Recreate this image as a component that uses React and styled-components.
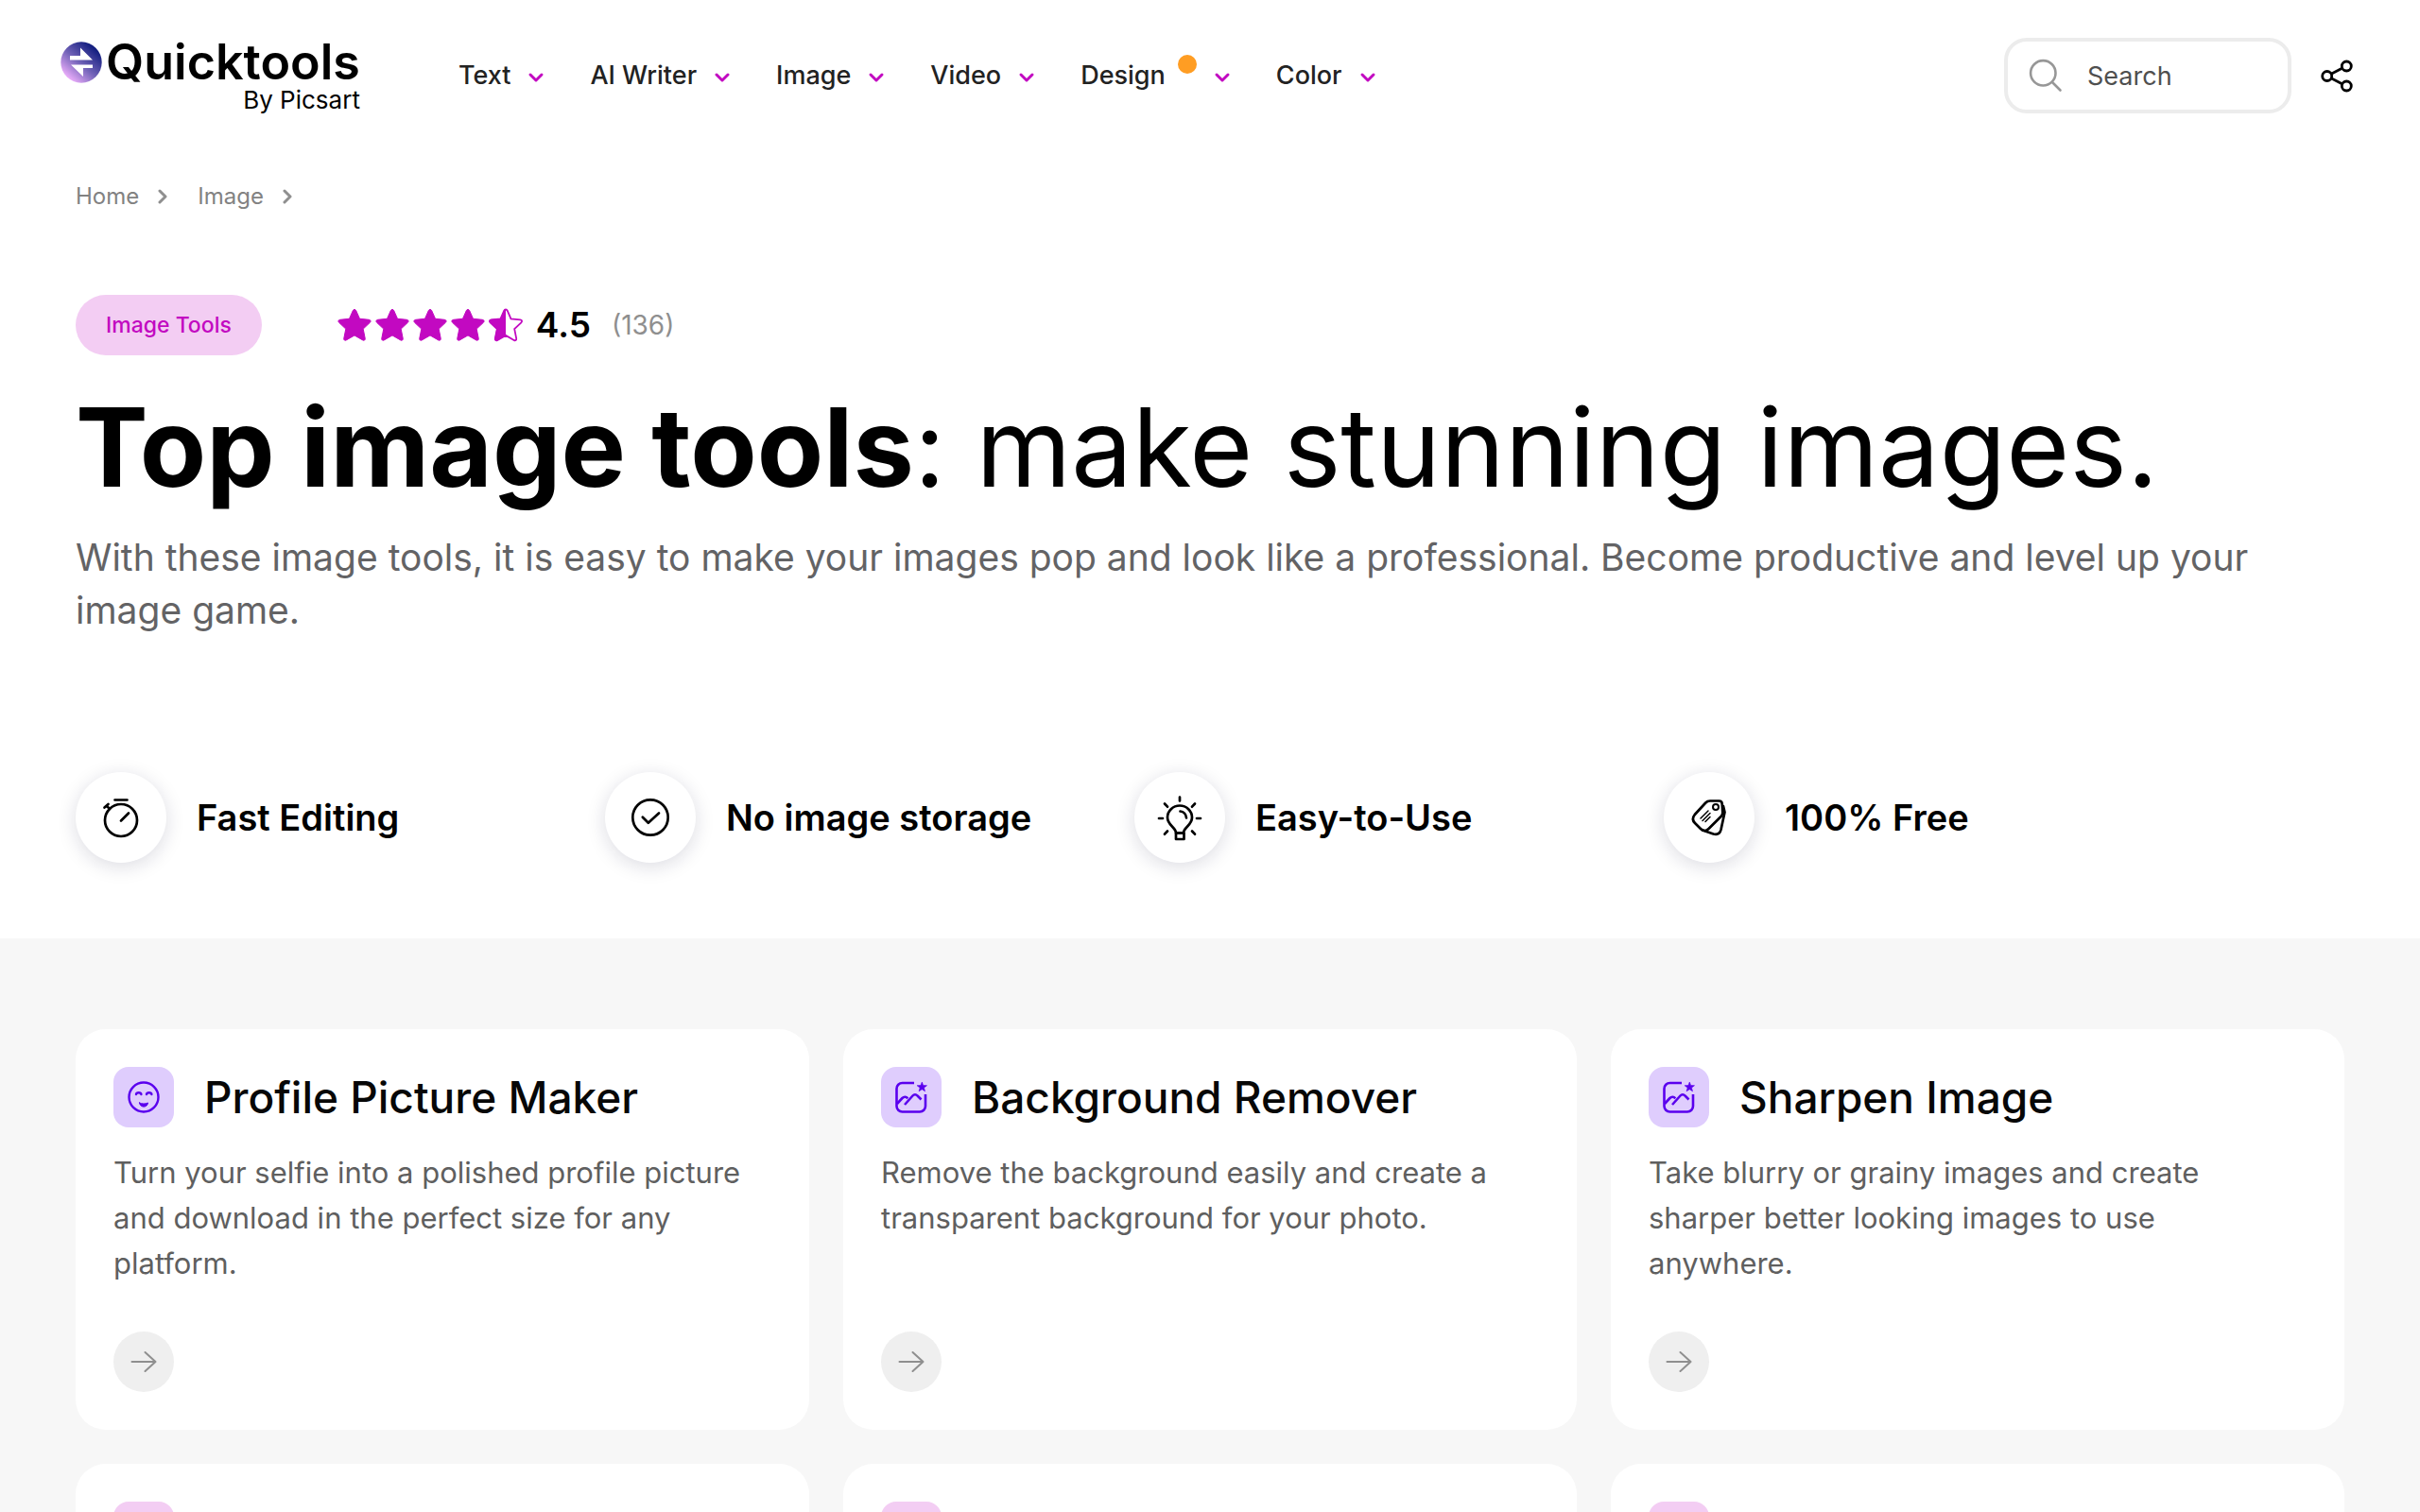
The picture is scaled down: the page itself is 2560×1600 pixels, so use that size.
import React from 'react'
import styled, { createGlobalStyle } from 'styled-components'

const GlobalStyle = createGlobalStyle`
  * {
    box-sizing: border-box;
  }

  body {
    margin: 0;
    background: #fff;
    color: #000;
    font-family: Inter, 'Open Sans', sans-serif;
  }
`

const purple = '#c209c1'
const violet = '#5a00ee'

const Header = styled.header`
  display: flex;
  align-items: center;
  height: 160px;
  padding: 0 64px;
`

const LogoLink = styled.a`
  display: flex;
  flex-direction: column;
  align-items: flex-end;
  color: #000;
  text-decoration: none;
`

const LogoRow = styled.span`
  display: flex;
  align-items: center;
  gap: 4px;
  font-size: 52px;
  font-weight: 600;
  line-height: 52px;
`

const LogoBy = styled.span`
  font-size: 26px;
  line-height: 28px;
`

const Nav = styled.nav`
  display: flex;
  gap: 43px;
  margin-left: 104px;
`

const NavButton = styled.button`
  display: flex;
  align-items: center;
  gap: 13px;
  padding: 0;
  border: 0;
  background: none;
  color: #222;
  font-family: inherit;
  font-size: 27px;
  font-weight: 500;
  line-height: 40px;
`

const Dot = styled.span`
  width: 20px;
  height: 20px;
  margin-bottom: 24px;
  border-radius: 50%;
  background: #ff9d23;
`

const HeaderRight = styled.div`
  display: flex;
  align-items: center;
  gap: 28px;
  margin-left: auto;
`

const SearchBox = styled.label`
  display: flex;
  align-items: center;
  gap: 24px;
  width: 304px;
  height: 80px;
  padding: 0 20px;
  border: 4px solid #ececec;
  border-radius: 24px;
`

const SearchInput = styled.input`
  flex: 1;
  min-width: 0;
  padding: 0;
  border: 0;
  outline: 0;
  background: none;
  color: #4f4f4f;
  font-family: inherit;
  font-size: 27px;

  &::placeholder {
    color: #4f4f4f;
    opacity: 1;
  }
`

const IconButton = styled.button`
  display: flex;
  padding: 0;
  border: 0;
  background: none;
`

const Breadcrumbs = styled.nav`
  display: flex;
  gap: 32px;
  padding: 32px 80px 0;
`

const Crumb = styled.a`
  display: flex;
  align-items: center;
  gap: 20px;
  color: #828282;
  font-size: 24px;
  line-height: 32px;
  text-decoration: none;
`

const Hero = styled.section`
  padding: 88px 80px 80px;
`

const MetaRow = styled.div`
  display: flex;
  align-items: center;
`

const Tag = styled.a`
  padding: 0 32px;
  border-radius: 32px;
  background: #f3cdf3;
  color: ${purple};
  font-size: 23px;
  font-weight: 500;
  line-height: 64px;
  text-decoration: none;
`

const Stars = styled.div`
  display: flex;
  margin-left: 78px;
`

const Score = styled.span`
  margin-left: 12px;
  font-size: 37px;
  font-weight: 600;
  line-height: 64px;
`

const Votes = styled.span`
  margin-left: 22px;
  color: #8f8f8f;
  font-size: 28px;
`

const Title = styled.h1`
  margin: 26px 0 0;
  font-size: 115px;
  font-weight: 400;
  line-height: 144px;

  strong {
    font-weight: 700;
  }
`

const Lead = styled.p`
  margin: 16px 0 0;
  color: #636365;
  font-size: 39px;
  line-height: 56px;
`

const Features = styled.ul`
  display: grid;
  grid-template-columns: repeat(4, 560px);
  margin: 143px 0 0;
  padding: 0;
  list-style: none;
`

const Feature = styled.li`
  display: flex;
  align-items: center;
  gap: 32px;
  font-size: 38px;
  font-weight: 600;
`

const FeatureIcon = styled.span`
  display: flex;
  width: 96px;
  height: 96px;
  border-radius: 50%;
  background: #fff;
  box-shadow: 0 4px 20px rgba(20, 20, 60, 0.15);
`

const Tools = styled.section`
  padding: 96px 80px;
  background: #f7f7f7;
`

const Grid = styled.div`
  display: grid;
  grid-template-columns: repeat(3, 1fr);
  gap: 36px;
`

const Card = styled.article`
  display: flex;
  flex-direction: column;
  min-height: 424px;
  padding: 40px;
  border-radius: 32px;
  background: #fff;
`

const CardHead = styled.div`
  display: flex;
  align-items: center;
  gap: 32px;
`

const CardIcon = styled.span`
  display: flex;
  width: 64px;
  height: 64px;
  border-radius: 16px;
  background: ${props => (props.$pink ? '#f3cdf3' : '#dfcdfd')};
`

const CardTitle = styled.h2`
  margin: 0;
  color: #070707;
  font-size: 46px;
  font-weight: 500;
  line-height: 64px;
`

const CardText = styled.p`
  margin: 24px 0 48px;
  color: #5f5f5f;
  font-size: 31px;
  line-height: 48px;
`

const CardLink = styled.a`
  display: flex;
  width: 64px;
  height: 64px;
  margin-top: auto;
  border-radius: 50%;
  background: #efefef;
`

function LogoMark() {
  return (
    <svg width="44" height="44" viewBox="0 0 44 44" aria-hidden="true">
      <defs>
        <linearGradient id="mark" x1="0.15" y1="0.9" x2="0.8" y2="0.15">
          <stop offset="0" stopColor="#f3b2ff" />
          <stop offset="0.5" stopColor="#7263b8" />
          <stop offset="1" stopColor="#141f80" />
        </linearGradient>
      </defs>
      <circle cx="22" cy="22" r="21.7" fill="url(#mark)" />
      <path d="M10 19.5V15h11V6.5L34 19.5zM34 24.5V28H24v9L11 24.5z" fill="#fff" />
    </svg>
  )
}

function ChevronDown() {
  return (
    <svg width="28" height="40" viewBox="0 0 28 40" fill="none" stroke={purple} strokeWidth="3" strokeLinecap="round" strokeLinejoin="round" aria-hidden="true">
      <path d="M8 19l6 6 6-6" />
    </svg>
  )
}

function ChevronRight() {
  return (
    <svg width="10" height="18" viewBox="0 0 10 18" fill="none" stroke="#8f8f8f" strokeWidth="3" strokeLinecap="round" strokeLinejoin="round" aria-hidden="true">
      <path d="M2 3l6 6-6 6" />
    </svg>
  )
}

function Star({ half }) {
  const shape = 'M20 3.5c.8 0 1.4.4 1.7 1.2l3.8 8.6 9.8 1c1.8.2 2.4 1.8 1.1 3l-7.2 6.8 2 10c.3 1.8-1 2.7-2.5 1.8L20 30.9l-8.7 5c-1.5.9-2.8 0-2.5-1.8l2-10-7.2-6.8c-1.3-1.2-.7-2.8 1.1-3l9.8-1 3.8-8.6c.3-.8.9-1.2 1.7-1.2z'
  return (
    <svg width="40" height="40" viewBox="0 0 40 40" aria-hidden="true">
      {half && (
        <clipPath id="left-half">
          <rect width="20" height="40" />
        </clipPath>
      )}
      {half && <path d={shape} fill="none" stroke={purple} strokeWidth="1.8" />}
      <path d={shape} fill={purple} stroke={purple} strokeWidth="1" clipPath={half ? 'url(#left-half)' : undefined} />
    </svg>
  )
}

function FeatureSvg({ children }) {
  return (
    <svg width="96" height="96" viewBox="0 0 96 96" fill="none" stroke="#000" strokeWidth="2.7" strokeLinecap="round" strokeLinejoin="round" aria-hidden="true">
      {children}
    </svg>
  )
}

function Stopwatch() {
  return (
    <FeatureSvg>
      <circle cx="48" cy="51" r="17" />
      <path d="M41.5 29.5h13M48 51.5l8-8M30.5 37.5l4-3.5M32.5 35.8l3.5 3" />
    </FeatureSvg>
  )
}

function CheckCircle() {
  return (
    <FeatureSvg>
      <circle cx="48" cy="48" r="18.7" />
      <path d="M39.8 47.8l6 6L57 43.5" />
    </FeatureSvg>
  )
}

function Bulb() {
  return (
    <FeatureSvg>
      <path d="M44 64.5c0-6-9-8-9-16.5a13 12.5 0 0 1 26 0c0 8.5-9 10.5-9 16.5z" />
      <path d="M44 64.5h8.5v6.5H44zM48.5 41.5c3.5.3 6.2 3 6.5 7" />
      <path d="M48 26.5v4M26 49h4M66 49h4M32 33.5l3 3.2M64 33.5l-3 3.2M35 62.5l-3 3.2M61 62.5l3 3.2" />
    </FeatureSvg>
  )
}

function PriceTag() {
  return (
    <FeatureSvg>
      <path d="M49 30.5h9.5c2 0 3.2 1.2 3.2 3.2l.6 9c0 1.5-.5 2.8-1.5 4L47.5 60c-2.5 2.5-6 2.5-8.5 0l-6-6c-2.5-2.5-2.6-6-.2-9l11.5-12.5c1.2-1.3 2.7-2 4.7-2z" />
      <path d="M63 36l1.5 6.5-4 18.5c-1 4-4 5.5-8 4.5L41 61.5" />
      <circle cx="55" cy="37" r="3" strokeWidth="2" />
      <path d="M39 49l8-8M41 51.5l8-8M44 52.5l5-5" strokeWidth="1.5" />
    </FeatureSvg>
  )
}

function Smile() {
  return (
    <svg width="64" height="64" viewBox="0 0 64 64" fill="none" stroke={violet} strokeWidth="2.4" strokeLinecap="round" aria-hidden="true">
      <circle cx="32" cy="32" r="15.5" />
      <path d="M24 29c.4-2.3 5-2.3 5.4 0M35 29c.4-2.3 5-2.3 5.4 0" />
      <path d="M27.5 38c3 1.4 6 1.4 9 0-.5 5.5-8.5 5.5-9 0z" fill={violet} strokeWidth="1" strokeLinejoin="round" />
    </svg>
  )
}

function MagicImage() {
  return (
    <svg width="64" height="64" viewBox="0 0 64 64" fill="none" stroke={violet} strokeWidth="2.6" strokeLinejoin="round" aria-hidden="true">
      <path d="M35 17H22.5a6 6 0 0 0-6 6v18.5a6 6 0 0 0 6 6H41a6 6 0 0 0 6-6V29" />
      <path d="M17 39l5.5-6c1.8-1.8 4-1.8 5.8.3M25 40l8.5-9.5c1.5-1.7 3.5-1.7 5 0l4 4" />
      <path d="M43.3 16l1.3 3.5 3.9.2-3 2.4 1 3.7-3.2-2.1-3.2 2.1 1-3.7-3-2.4 3.9-.2z" fill={violet} strokeWidth="0.6" />
    </svg>
  )
}

function Arrow() {
  return (
    <svg width="64" height="64" viewBox="0 0 64 64" fill="none" stroke="#8f8f8f" strokeWidth="2" strokeLinecap="round" strokeLinejoin="round" aria-hidden="true">
      <path d="M19.5 32h25M33.5 22l11 10-11 10" />
    </svg>
  )
}

const menu = [
  { name: 'Text' },
  { name: 'AI Writer' },
  { name: 'Image' },
  { name: 'Video' },
  { name: 'Design', isNew: true },
  { name: 'Color' },
]

const features = [
  { name: 'Fast Editing', Icon: Stopwatch },
  { name: 'No image storage', Icon: CheckCircle },
  { name: 'Easy-to-Use', Icon: Bulb },
  { name: '100% Free', Icon: PriceTag },
]

const tools = [
  {
    name: 'Profile Picture Maker',
    text: 'Turn your selfie into a polished profile picture and download in the perfect size for any platform.',
    Icon: Smile,
  },
  {
    name: 'Background Remover',
    text: 'Remove the background easily and create a transparent background for your photo.',
    Icon: MagicImage,
  },
  {
    name: 'Sharpen Image',
    text: 'Take blurry or grainy images and create sharper better looking images to use anywhere.',
    Icon: MagicImage,
  },
]

export default function App() {
  return (
    <>
      <GlobalStyle />
      <Header>
        <LogoLink href="#">
          <LogoRow>
            <LogoMark />
            Quicktools
          </LogoRow>
          <LogoBy>By Picsart</LogoBy>
        </LogoLink>
        <Nav>
          {menu.map(el => (
            <NavButton type="button" key={el.name}>
              {el.name}
              {el.isNew && <Dot />}
              <ChevronDown />
            </NavButton>
          ))}
        </Nav>
        <HeaderRight>
          <SearchBox>
            <svg width="40" height="40" viewBox="0 0 40 40" fill="none" stroke="#979797" strokeWidth="2.6" strokeLinecap="round" aria-hidden="true">
              <circle cx="17.3" cy="17.3" r="13.2" />
              <path d="M27 27l8.5 8.5" />
            </svg>
            <SearchInput type="text" placeholder="Search" aria-label="Search" />
          </SearchBox>
          <IconButton type="button" aria-label="Share">
            <svg width="44" height="44" viewBox="0 0 44 44" fill="none" stroke="#000" strokeWidth="2.8" aria-hidden="true">
              <circle cx="9.7" cy="22.5" r="5" />
              <circle cx="30.3" cy="12" r="5" />
              <circle cx="30.3" cy="33" r="5" />
              <path d="M14.5 20l11-5.7M14.5 25l11 5.7" />
            </svg>
          </IconButton>
        </HeaderRight>
      </Header>

      <main>
        <Breadcrumbs aria-label="Breadcrumb">
          <Crumb href="#">
            Home
            <ChevronRight />
          </Crumb>
          <Crumb href="#">
            Image
            <ChevronRight />
          </Crumb>
        </Breadcrumbs>

        <Hero>
          <MetaRow>
            <Tag href="#">Image Tools</Tag>
            <Stars>
              <Star />
              <Star />
              <Star />
              <Star />
              <Star half />
            </Stars>
            <Score>4.5</Score>
            <Votes>(136)</Votes>
          </MetaRow>
          <Title>
            <strong>Top image tools</strong>: make stunning images.
          </Title>
          <Lead>
            With these image tools, it is easy to make your images pop and look like a professional. Become productive and
            level up your image game.
          </Lead>
          <Features>
            {features.map(({ name, Icon }) => (
              <Feature key={name}>
                <FeatureIcon>
                  <Icon />
                </FeatureIcon>
                {name}
              </Feature>
            ))}
          </Features>
        </Hero>

        <Tools>
          <Grid>
            {tools.map(({ name, text, Icon }) => (
              <Card key={name}>
                <CardHead>
                  <CardIcon>
                    <Icon />
                  </CardIcon>
                  <CardTitle>{name}</CardTitle>
                </CardHead>
                <CardText>{text}</CardText>
                <CardLink href="#" aria-label={name}>
                  <Arrow />
                </CardLink>
              </Card>
            ))}
            {tools.map(el => (
              <Card key={'next-' + el.name}>
                <CardIcon $pink />
              </Card>
            ))}
          </Grid>
        </Tools>
      </main>
    </>
  )
}
